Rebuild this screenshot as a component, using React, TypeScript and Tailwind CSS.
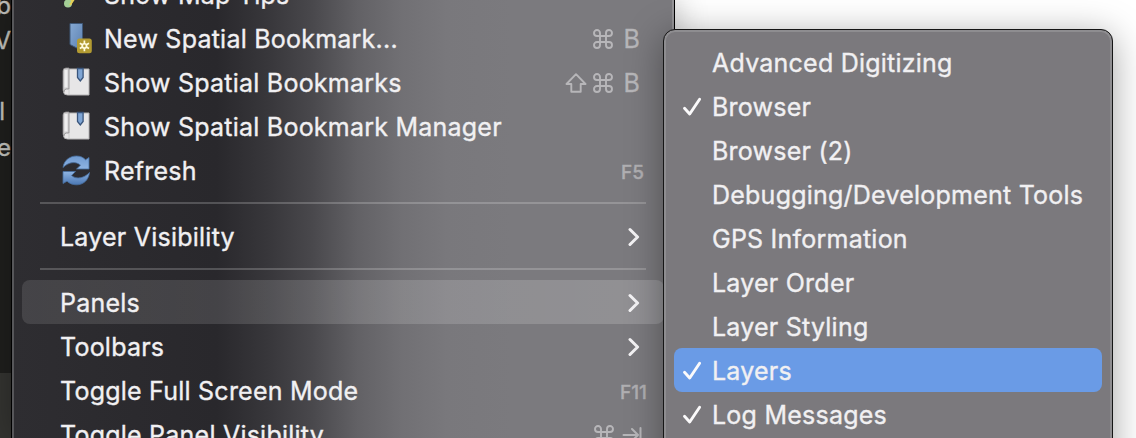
import type { ReactNode } from "react";

function BookmarkNewIcon() {
  return (
    <svg width="30" height="32" viewBox="0 0 30 32" className="block">
      <defs>
        <linearGradient id="ribbon" x1="0" y1="0" x2="1" y2="1">
          <stop offset="0" stopColor="#86a9d3" />
          <stop offset="1" stopColor="#5b80b1" />
        </linearGradient>
      </defs>
      <path d="M8 0.500H20.500V28L8 21.500Z" fill="url(#ribbon)" stroke="#3f5878" strokeWidth="1" />
      <rect x="15" y="15.500" width="14.800" height="14.800" rx="2.500" fill="#b39b32" />
      <path d="M22.400 17.600V28.200M17.800 20.200L27 25.600M17.800 25.600L27 20.200" stroke="#fffbe0" strokeWidth="1.700" />
      <circle cx="22.400" cy="22.900" r="3" fill="#fffbe0" />
      <circle cx="22.400" cy="22.900" r="1.300" fill="#b39b32" />
    </svg>
  );
}

function BookIcon() {
  return (
    <svg width="30" height="32" viewBox="0 0 30 32" className="block">
      <path d="M3.500 2H27V28H5.500Q1.500 28 1.500 24.500V4.500Q1.500 2 3.500 2Z" fill="#e7e6e7" stroke="#b5b4b5" strokeWidth="1" />
      <path d="M1 4Q1 1 4 1H7V22H4.500Q2 22 2 25Q1 24.500 1 22.500Z" fill="#cfcecf" stroke="#8d8c8d" strokeWidth="0.800" />
      <path d="M4 3V20.500" stroke="#efeeef" strokeWidth="3" />
      <path d="M7 22V27.500" stroke="#c9c8c9" strokeWidth="0.800" />
      <path d="M15.500 1.500V10.500L18.300 14L21.100 10.500V1.500Z" fill="#7fa5d4" stroke="#3a557c" strokeWidth="1.300" />
    </svg>
  );
}

function RefreshIcon() {
  return (
    <svg width="30" height="32" viewBox="0 0 30 32" className="block">
      <defs>
        <linearGradient id="sync" x1="0" y1="0" x2="0" y2="1">
          <stop offset="0" stopColor="#6f9ad0" />
          <stop offset="1" stopColor="#8fb4e2" />
        </linearGradient>
        <linearGradient id="sync2" x1="0" y1="0" x2="0" y2="1">
          <stop offset="0" stopColor="#8fb4e2" />
          <stop offset="1" stopColor="#4a77b3" />
        </linearGradient>
      </defs>
      <path d="M1 12.500C2 5 8 1 14.500 1C18.500 1 21.500 2.500 23.500 4.800L27 2.500V14H14.500L18.500 10.200C14 6 6.500 7 1 12.500Z" fill="url(#sync)" stroke="#486f9f" strokeWidth="0.800" />
      <path d="M27.500 17.500C26.500 25.500 21 29.800 14.500 29.800C10.500 29.800 7.500 28.500 5 26.200L1 28.500V16.500H13.500L9.500 20.500C14.500 25 22.500 23 27.500 17.500Z" fill="url(#sync2)" stroke="#486f9f" strokeWidth="0.800" />
    </svg>
  );
}

function MapTipsIcon() {
  return (
    <svg width="30" height="32" viewBox="0 0 30 32" className="block">
      <path d="M12 16L7 24" stroke="#e5cf55" strokeWidth="5" />
      <circle cx="6" cy="24.500" r="4" fill="#a3cf96" />
      <path d="M12 20L8 26" stroke="#e5cf55" strokeWidth="2" />
    </svg>
  );
}

function CommandIcon() {
  return (
    <svg width="20" height="20" viewBox="0 0 20 20" fill="none" stroke="currentColor" strokeWidth="1.900" className="block">
      <path d="M7 7V4A3 3 0 1 0 4 7H16A3 3 0 1 0 13 4V16A3 3 0 1 0 16 13H4A3 3 0 1 0 7 16Z" />
    </svg>
  );
}

function ShiftIcon() {
  return (
    <svg width="22" height="20" viewBox="0 0 22 20" fill="none" stroke="currentColor" strokeWidth="1.900" strokeLinejoin="round" className="block">
      <path d="M11 1.200L20.500 11H15.700V18.800H6.300V11H1.500Z" />
    </svg>
  );
}

function TabIcon() {
  return (
    <svg width="20" height="20" viewBox="0 0 20 20" fill="none" stroke="currentColor" strokeWidth="2" strokeLinecap="round" strokeLinejoin="round" className="block">
      <path d="M1.500 10H15.500M10 4L16 10L10 16M18.500 3V17" />
    </svg>
  );
}

function Chevron() {
  return (
    <svg width="12" height="20" viewBox="0 0 12 20" fill="none" stroke="#f4f3f5" strokeWidth="3" strokeLinecap="round" strokeLinejoin="round" className="block">
      <path d="M2 2.500L9.600 10L2 17.500" />
    </svg>
  );
}

function Check() {
  return (
    <svg width="20" height="20" viewBox="0 0 20 20" fill="none" stroke="#fbfafb" strokeWidth="2.900" strokeLinecap="round" strokeLinejoin="round" className="block">
      <path d="M2.500 11.300L7.700 17L17.600 2.200" />
    </svg>
  );
}

function Row({ icon, label, active = false, children }: {
  icon?: ReactNode;
  label: string;
  active?: boolean;
  children?: ReactNode;
}) {
  return (
    <div className={`mr-[10px] ml-[10px] flex h-11 shrink-0 items-center rounded-lg pt-0.5 pl-[38px] ${active ? "bg-linear-to-r from-white/[0.11] to-white/[0.17]" : ""}`}>
      {icon && <div className="mr-[12px] ml-[2px] w-[30px]">{icon}</div>}
      <span className="grow whitespace-pre">{label}</span>
      {children}
    </div>
  );
}

function Separator() {
  return (
    <div className="mr-[28px] ml-[28px] flex h-[22px] shrink-0 items-center">
      <div className="h-[2px] w-full bg-white/20" />
    </div>
  );
}

const panels = [
  { label: "Advanced Digitizing", checked: false, active: false },
  { label: "Browser", checked: true, active: false },
  { label: "Browser (2)", checked: false, active: false },
  { label: "Debugging/Development Tools", checked: false, active: false },
  { label: "GPS Information", checked: false, active: false },
  { label: "Layer Order", checked: false, active: false },
  { label: "Layer Styling", checked: false, active: false },
  { label: "Layers", checked: true, active: true },
  { label: "Log Messages", checked: true, active: false },
];

export default function App() {
  return (
    <div className="flex h-[438px] w-[1136px] overflow-hidden bg-white font-['Inter',sans-serif] text-[25px] leading-[44px] tracking-[0.23px] text-[#f1f0f2] [-webkit-text-stroke:0.35px_currentColor]">
      <div className="flex w-[11px] shrink-0 flex-col items-end overflow-hidden bg-[linear-gradient(#1f1f1d_0_373px,#343431_373px)] text-[24px] tracking-normal text-[#c4c4bf]">
        <span className="-mt-4 h-[35px] shrink-0">b</span>
        <span className="h-[71px] shrink-0">V</span>
        <span className="mr-[6px] h-9 shrink-0">l</span>
        <span className="shrink-0">e</span>
      </div>

      <div className="flex w-[664px] shrink-0 flex-col overflow-hidden border-x border-black bg-[linear-gradient(90deg,#2e2d31_0,#29282c_205px,#39383c_260px,#49484c_300px,#626165_345px,#717074_390px,#79787c_435px,#7b7a7e_500px)] shadow-[inset_2px_0_0_rgba(255,255,255,0.2),inset_-2px_0_0_rgba(255,255,255,0.2),0_0_30px_rgba(0,0,0,0.3)]">
        <div className="-mt-7 flex flex-col">
          <Row icon={<MapTipsIcon />} label="Show Map Tips" />
          <Row icon={<BookmarkNewIcon />} label="New Spatial Bookmark...">
            <div className="mr-6 flex items-center gap-2.5 text-[#b7b6b9]">
              <CommandIcon />
              <span>B</span>
            </div>
          </Row>
          <Row icon={<BookIcon />} label="Show Spatial Bookmarks">
            <div className="mr-6 flex items-center text-[#b7b6b9]">
              <ShiftIcon />
              <div className="ml-1.5 flex items-center gap-2.5">
                <CommandIcon />
                <span>B</span>
              </div>
            </div>
          </Row>
          <Row icon={<BookIcon />} label="Show Spatial Bookmark Manager" />
          <Row icon={<RefreshIcon />} label="Refresh">
            <span className="mr-5 pt-1 text-[19px] font-medium tracking-normal text-[#b0afb2]">F5</span>
          </Row>
          <Separator />
          <Row label="Layer Visibility">
            <div className="mr-6"><Chevron /></div>
          </Row>
          <Separator />
          <Row label="Panels" active>
            <div className="mr-6"><Chevron /></div>
          </Row>
          <Row label="Toolbars">
            <div className="mr-6"><Chevron /></div>
          </Row>
          <Row label="Toggle Full Screen Mode">
            <span className="mr-[17px] pt-1 text-[19px] font-medium tracking-normal text-[#b0afb2]">F11</span>
          </Row>
          <Row label="Toggle Panel Visibility">
            <div className="mr-[22px] flex items-center gap-2 text-[#b7b6b9]">
              <CommandIcon />
              <TabIcon />
            </div>
          </Row>
        </div>
      </div>

      <div className="relative mt-[29px] -ml-3 h-[460px] w-[450px] shrink-0 rounded-[12px] border border-[#161616] bg-[#7b797d] px-2.5 pt-2.5 shadow-[inset_0_0_0_2px_rgba(255,255,255,0.15),0_6px_36px_rgba(0,0,0,0.36)]">
        {panels.map((panel) => (
          <div key={panel.label} className={`flex h-11 items-center rounded-lg pt-0.5 pl-2 ${panel.active ? "bg-[#6a9be6]" : ""}`}>
            <div className="w-[30px]">{panel.checked && <Check />}</div>
            <span className="whitespace-pre">{panel.label}</span>
          </div>
        ))}
      </div>
    </div>
  );
}
